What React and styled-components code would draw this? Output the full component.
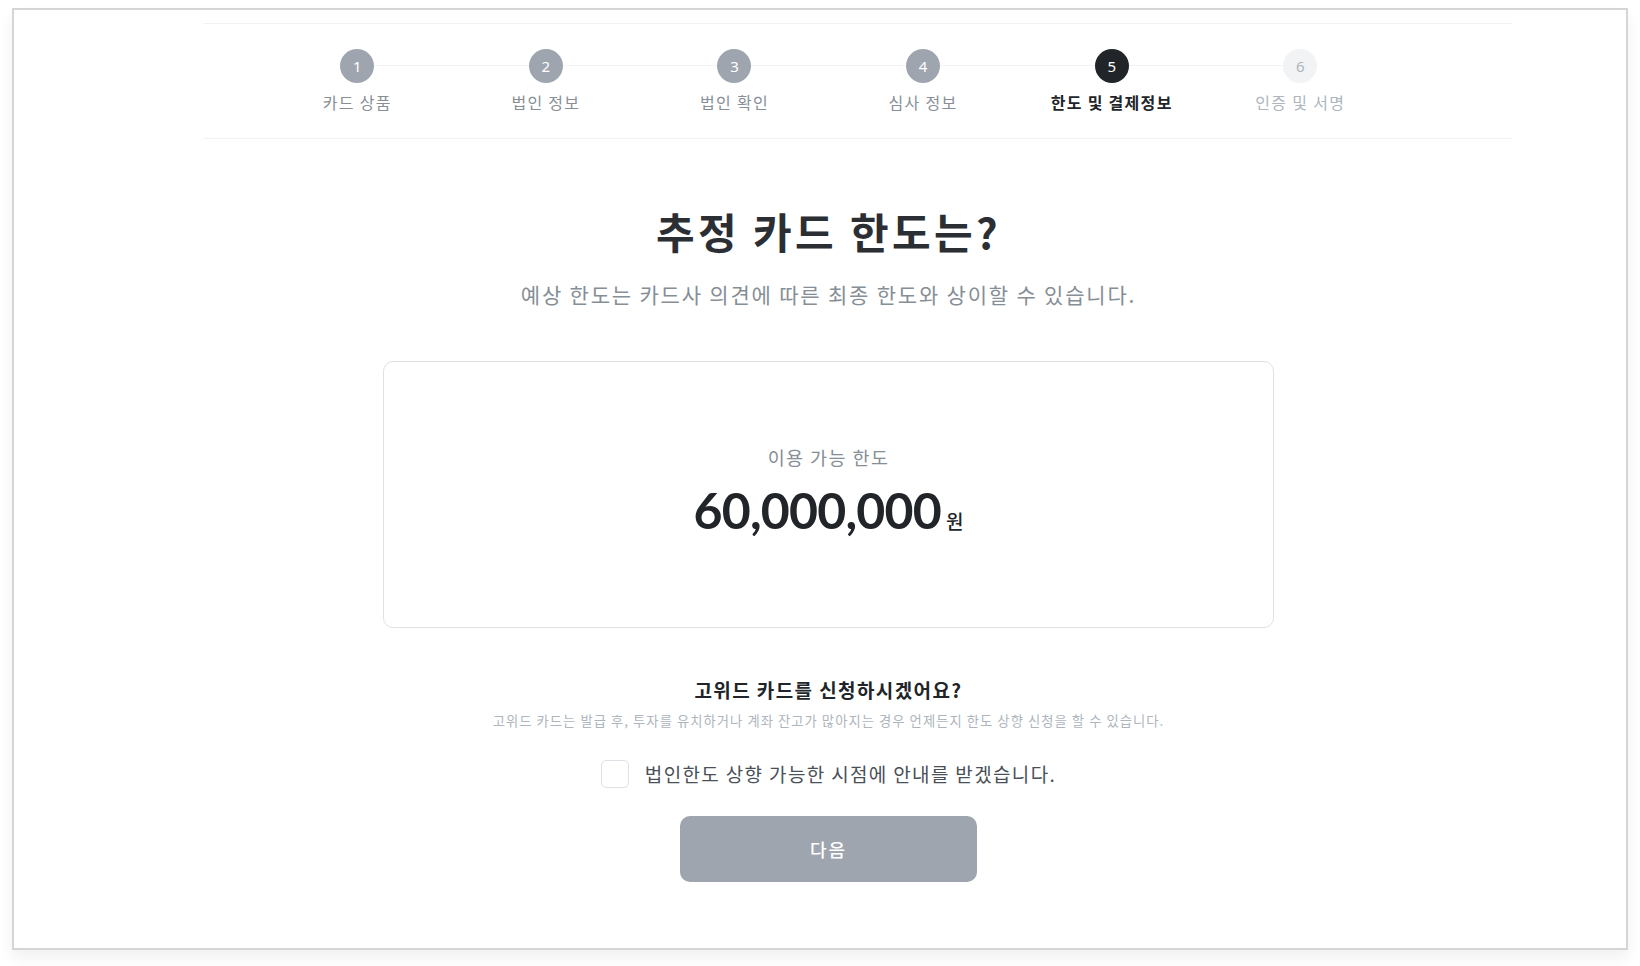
import styled, { createGlobalStyle } from "styled-components";

const GlobalStyle = createGlobalStyle`
  html, body {
    margin: 0;
    padding: 0;
    background: #ffffff;
  }
  body {
    font-family: "Noto Sans CJK KR", "Noto Sans", sans-serif;
    color: #212529;
  }
`;

const Page = styled.div`
  box-sizing: border-box;
  padding: 8px 12px 16px 12px;
  width: 1640px;
`;

const Frame = styled.div`
  box-sizing: border-box;
  width: 1616px;
  height: 942px;
  border: 2px solid #d5d5d5;
  background: #ffffff;
  box-shadow: 0 8px 14px rgba(0, 0, 0, 0.06);
  display: flex;
  flex-direction: column;
`;

const Stepper = styled.ol`
  box-sizing: border-box;
  list-style: none;
  margin: 13px 0 0 189px;
  padding: 25px 0 25px 60px;
  width: 1309px;
  border-top: 1px solid #f1f3f5;
  border-bottom: 1px solid #f1f3f5;
  display: flex;
`;

const Step = styled.li`
  position: relative;
  width: 188.6px;
  display: flex;
  flex-direction: column;
  align-items: center;
  gap: 8px;

  &:not(:last-child)::after {
    content: "";
    position: absolute;
    top: 16px;
    left: 50%;
    width: 100%;
    height: 1px;
    background: #f1f3f5;
  }
`;

const circleColors = {
  done: { bg: "#9ea5ae", fg: "#ffffff" },
  active: { bg: "#212529", fg: "#ffffff" },
  todo: { bg: "#f1f3f5", fg: "#adb5bd" },
};

const labelColors = {
  done: "#868e96",
  active: "#212529",
  todo: "#adb5bd",
};

const StepCircle = styled.span`
  position: relative;
  z-index: 1;
  width: 34px;
  height: 34px;
  border-radius: 50%;
  background: ${({ $state }) => circleColors[$state].bg};
  color: ${({ $state }) => circleColors[$state].fg};
  display: flex;
  align-items: center;
  justify-content: center;
  font-family: "Noto Sans", sans-serif;
  font-size: 15px;
  line-height: 1;
`;

const StepLabel = styled.span`
  font-size: 16px;
  line-height: 22px;
  letter-spacing: 1.3px;
  white-space: nowrap;
  color: ${({ $state }) => labelColors[$state]};
  font-weight: ${({ $state }) => ($state === "active" ? 700 : 400)};
`;

const Content = styled.main`
  width: 891px;
  margin-left: 369px;
  display: flex;
  flex-direction: column;
  align-items: center;
`;

const Title = styled.h1`
  margin: 66px 0 0 0;
  font-size: 42px;
  line-height: 52px;
  font-weight: 700;
  letter-spacing: 3.4px;
  color: #2b2f33;
`;

const Subtitle = styled.p`
  margin: 22px 0 0 0;
  font-size: 21px;
  line-height: 30px;
  color: #868e96;
  letter-spacing: 1.8px;
`;

const LimitCard = styled.section`
  box-sizing: border-box;
  margin-top: 52px;
  width: 891px;
  height: 267px;
  border: 1px solid #dee2e6;
  border-radius: 10px;
  display: flex;
  flex-direction: column;
  align-items: center;
  justify-content: center;
  gap: 10px;
  padding-bottom: 6px;
`;

const CardLabel = styled.span`
  font-size: 18.5px;
  line-height: 26px;
  letter-spacing: 1.4px;
  color: #868e96;
`;

const Amount = styled.div`
  display: flex;
  align-items: baseline;
  gap: 5px;
  color: #212529;
`;

const AmountValue = styled.span`
  font-family: Lato, "Noto Sans", sans-serif;
  font-weight: 700;
  font-size: 50px;
  line-height: 60px;
  letter-spacing: -0.8px;
`;

const Currency = styled.span`
  font-size: 19px;
  font-weight: 500;
`;

const Question = styled.h2`
  margin: 49px 0 0 0;
  font-size: 19px;
  line-height: 26px;
  font-weight: 700;
  letter-spacing: 1.4px;
  color: #212529;
`;

const Notice = styled.p`
  margin: 8px 0 0 0;
  font-size: 13.3px;
  line-height: 20px;
  color: #adb5bd;
  letter-spacing: 1.05px;
  white-space: nowrap;
`;

const CheckRow = styled.label`
  margin-top: 29px;
  display: flex;
  align-items: center;
  gap: 16px;
  cursor: pointer;
`;

const CheckBox = styled.input.attrs({ type: "checkbox" })`
  appearance: none;
  margin: 0;
  width: 28px;
  height: 28px;
  border: 1px solid #dee2e6;
  border-radius: 5px;
  background: #ffffff;
`;

const CheckText = styled.span`
  font-size: 19px;
  line-height: 28px;
  color: #495057;
  letter-spacing: 1.35px;
`;

const NextButton = styled.button`
  margin-top: 28px;
  width: 297px;
  height: 66px;
  border: none;
  border-radius: 10px;
  background: #9ea5ae;
  color: #ffffff;
  font-family: "Noto Sans CJK KR", sans-serif;
  font-size: 18px;
  font-weight: 500;
  letter-spacing: 2px;
  cursor: default;
`;

const steps = [
  { no: 1, label: "카드 상품", state: "done" },
  { no: 2, label: "법인 정보", state: "done" },
  { no: 3, label: "법인 확인", state: "done" },
  { no: 4, label: "심사 정보", state: "done" },
  { no: 5, label: "한도 및 결제정보", state: "active" },
  { no: 6, label: "인증 및 서명", state: "todo" },
];

export default function App() {
  return (
    <>
      <GlobalStyle />
      <Page>
        <Frame>
          <Stepper>
            {steps.map((s) => (
              <Step key={s.no}>
                <StepCircle $state={s.state}>{s.no}</StepCircle>
                <StepLabel $state={s.state}>{s.label}</StepLabel>
              </Step>
            ))}
          </Stepper>
          <Content>
            <Title>추정 카드 한도는?</Title>
            <Subtitle>
              예상 한도는 카드사 의견에 따른 최종 한도와 상이할 수 있습니다.
            </Subtitle>
            <LimitCard>
              <CardLabel>이용 가능 한도</CardLabel>
              <Amount>
                <AmountValue>60,000,000</AmountValue>
                <Currency>원</Currency>
              </Amount>
            </LimitCard>
            <Question>고위드 카드를 신청하시겠어요?</Question>
            <Notice>
              고위드 카드는 발급 후, 투자를 유치하거나 계좌 잔고가 많아지는 경우
              언제든지 한도 상향 신청을 할 수 있습니다.
            </Notice>
            <CheckRow>
              <CheckBox />
              <CheckText>법인한도 상향 가능한 시점에 안내를 받겠습니다.</CheckText>
            </CheckRow>
            <NextButton>다음</NextButton>
          </Content>
        </Frame>
      </Page>
    </>
  );
}
